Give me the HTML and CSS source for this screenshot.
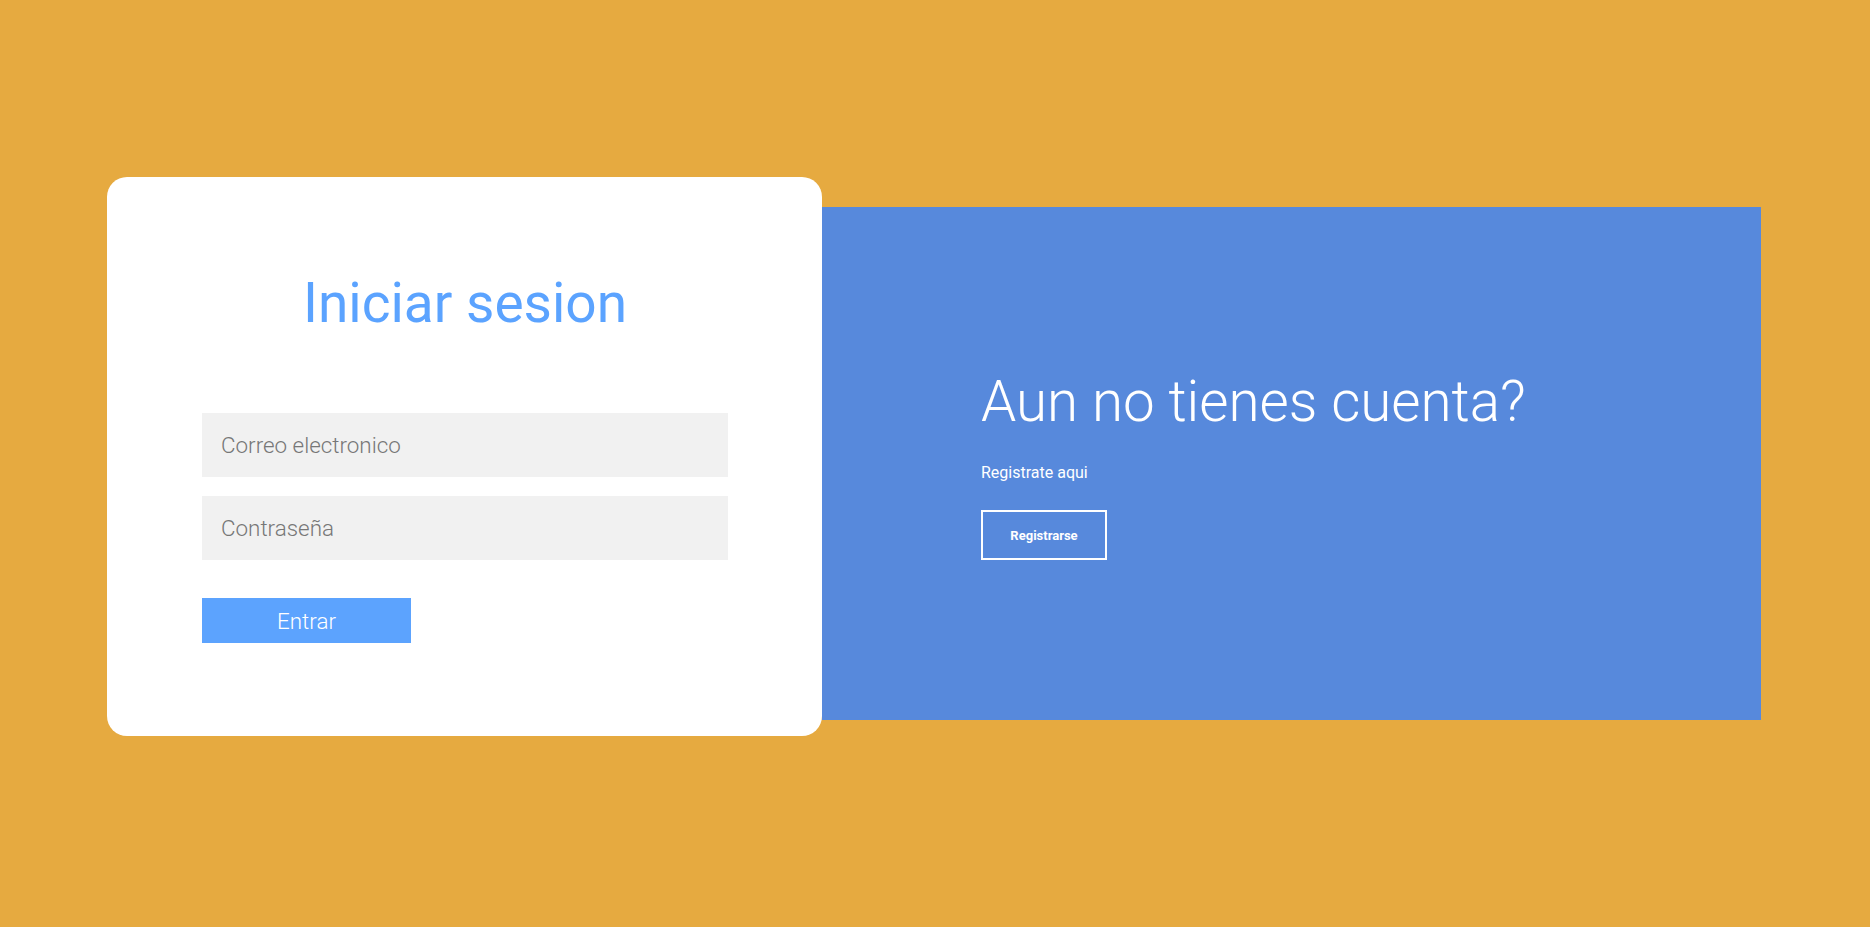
FILE: index.html
```html
<!DOCTYPE html>
<html lang="es">
<head>
<meta charset="utf-8">
<title>Iniciar sesion</title>
<link rel="stylesheet" href="styles.css">
</head>
<body>
<main class="wrap">
  <section class="card">
    <h1 class="card-title">Iniciar sesion</h1>
    <form class="form">
      <input class="field" type="email" placeholder="Correo electronico">
      <input class="field" type="password" placeholder="Contraseña">
      <button class="btn-enter" type="button">Entrar</button>
    </form>
  </section>
  <section class="panel">
    <h2 class="panel-title">Aun no tienes cuenta?</h2>
    <p class="panel-text">Registrate aqui</p>
    <button class="btn-register" type="button">Registrarse</button>
  </section>
</main>
</body>
</html>
```

FILE: styles.css
```css
* { box-sizing: border-box; }
html, body { margin: 0; padding: 0; }
body {
  background: #e6aa40;
  font-family: Roboto, "Liberation Sans", sans-serif;
  height: 927px;
  overflow: hidden;
}
.wrap {
  height: 927px;
  display: flex;
  align-items: center;
  justify-content: flex-start;
  padding-left: 107px;
}
.card {
  width: 715px;
  height: 559px;
  margin-bottom: 14px;
  background: #fff;
  border-radius: 20px;
  padding: 99px 94px 0 95px;
  display: flex;
  flex-direction: column;
}
.card-title {
  margin: 0;
  font-size: 55px;
  line-height: 55px;
  font-weight: 400;
  color: #5ba3ff;
  text-align: center;
}
.form {
  margin-top: 82px;
  display: flex;
  flex-direction: column;
  align-items: flex-start;
}
.field {
  width: 526px;
  height: 64px;
  margin: 0 0 19px;
  border: 0;
  outline: 0;
  background: #f1f1f1;
  padding: 0 19px;
  font-family: Roboto, "Liberation Sans", sans-serif;
  font-size: 22.4px;
  font-weight: 300;
  color: #555;
}
.field::placeholder { color: #777; opacity: 1; }
.btn-enter {
  margin-top: 19px;
  width: 209px;
  height: 45px;
  border: 0;
  background: #5ca3fe;
  color: #fff;
  font-family: Roboto, "Liberation Sans", sans-serif;
  font-size: 22.4px;
  font-weight: 300;
  padding: 0;
}
.panel {
  width: 939px;
  height: 513px;
  background: #5789dc;
  padding: 167px 0 0 159px;
  color: #fff;
}
.panel-title {
  margin: 0;
  font-size: 56.5px;
  line-height: 56px;
  font-weight: 300;
}
.panel-text {
  margin: 33px 0 0;
  font-size: 16px;
  line-height: 19px;
  font-weight: 400;
}
.btn-register {
  margin-top: 28px;
  width: 126px;
  height: 50px;
  background: transparent;
  border: 2px solid #fff;
  color: #fff;
  font-family: Roboto, "Liberation Sans", sans-serif;
  font-size: 13px;
  font-weight: 700;
  padding: 0;
}
```
